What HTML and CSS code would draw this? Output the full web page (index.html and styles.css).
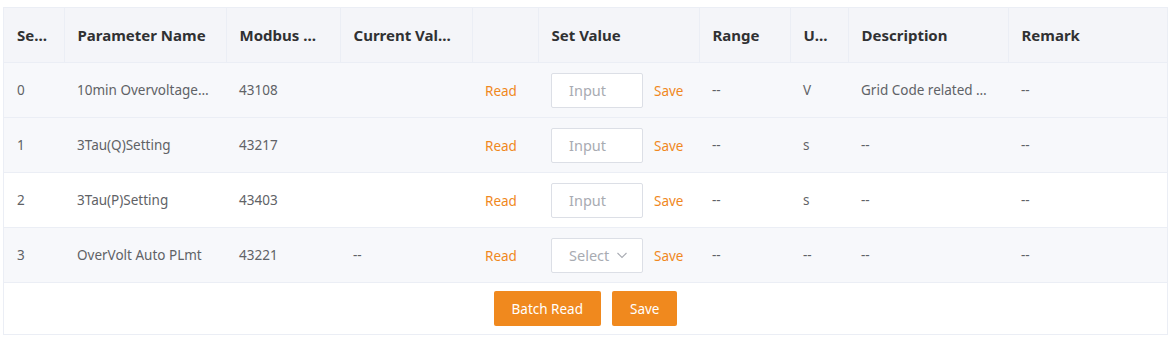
FILE: index.html
```html
<!DOCTYPE html>
<html lang="en">
<head>
<meta charset="utf-8">
<title>Parameter Settings</title>
<link rel="stylesheet" href="styles.css">
</head>
<body>
<div class="panel">
  <table class="param-table">
    <colgroup>
      <col class="c-seq"><col class="c-name"><col class="c-addr"><col class="c-cur">
      <col class="c-act"><col class="c-set"><col class="c-range"><col class="c-unit">
      <col class="c-desc"><col class="c-remark">
    </colgroup>
    <thead>
      <tr>
        <th><div class="cell">Serial No.</div></th>
        <th><div class="cell">Parameter Name</div></th>
        <th><div class="cell">Modbus Address</div></th>
        <th><div class="cell">Current Value</div></th>
        <th><div class="cell"></div></th>
        <th><div class="cell">Set Value</div></th>
        <th><div class="cell">Range</div></th>
        <th><div class="cell">Unit</div></th>
        <th><div class="cell">Description</div></th>
        <th><div class="cell">Remark</div></th>
      </tr>
    </thead>
    <tbody>
      <tr class="shaded">
        <td><div class="cell">0</div></td>
        <td><div class="cell">10min Overvoltage Protection</div></td>
        <td><div class="cell">43108</div></td>
        <td><div class="cell"></div></td>
        <td><div class="cell"><a class="link" href="#">Read</a></div></td>
        <td><div class="cell set"><span class="field">Input</span><a class="link" href="#">Save</a></div></td>
        <td><div class="cell">--</div></td>
        <td><div class="cell">V</div></td>
        <td><div class="cell">Grid Code related parameters</div></td>
        <td><div class="cell">--</div></td>
      </tr>
      <tr class="shaded">
        <td><div class="cell">1</div></td>
        <td><div class="cell">3Tau(Q)Setting</div></td>
        <td><div class="cell">43217</div></td>
        <td><div class="cell"></div></td>
        <td><div class="cell"><a class="link" href="#">Read</a></div></td>
        <td><div class="cell set"><span class="field">Input</span><a class="link" href="#">Save</a></div></td>
        <td><div class="cell">--</div></td>
        <td><div class="cell">s</div></td>
        <td><div class="cell">--</div></td>
        <td><div class="cell">--</div></td>
      </tr>
      <tr>
        <td><div class="cell">2</div></td>
        <td><div class="cell">3Tau(P)Setting</div></td>
        <td><div class="cell">43403</div></td>
        <td><div class="cell"></div></td>
        <td><div class="cell"><a class="link" href="#">Read</a></div></td>
        <td><div class="cell set"><span class="field">Input</span><a class="link" href="#">Save</a></div></td>
        <td><div class="cell">--</div></td>
        <td><div class="cell">s</div></td>
        <td><div class="cell">--</div></td>
        <td><div class="cell">--</div></td>
      </tr>
      <tr class="shaded">
        <td><div class="cell">3</div></td>
        <td><div class="cell">OverVolt Auto PLmt</div></td>
        <td><div class="cell">43221</div></td>
        <td><div class="cell">--</div></td>
        <td><div class="cell"><a class="link" href="#">Read</a></div></td>
        <td><div class="cell set"><span class="field select">Select<svg class="chev" viewBox="0 0 12 12" width="12" height="12"><path d="M1.5 4 L6 8.5 L10.5 4" fill="none" stroke="#a8abb2" stroke-width="1.1"/></svg></span><a class="link" href="#">Save</a></div></td>
        <td><div class="cell">--</div></td>
        <td><div class="cell">--</div></td>
        <td><div class="cell">--</div></td>
        <td><div class="cell">--</div></td>
      </tr>
    </tbody>
  </table>
  <div class="actions">
    <button class="btn" type="button">Batch Read</button>
    <button class="btn" type="button">Save</button>
  </div>
</div>
</body>
</html>
```
FILE: styles.css
```css
html, body {
  margin: 0;
  background: #ffffff;
}

body {
  padding: 7px 8px 0 3px;
  font-family: "Noto Sans", "Open Sans", Arial, sans-serif;
  font-size: 13.5px;
  color: #606266;
}

.panel {
  width: 1165px;
  border: 1px solid #ebeef5;
  box-sizing: border-box;
}

.param-table {
  width: 100%;
  table-layout: fixed;
  border-collapse: collapse;
}

.c-seq { width: 60px; }
.c-name { width: 162px; }
.c-addr { width: 114px; }
.c-cur { width: 132px; }
.c-act { width: 66px; }
.c-set { width: 161px; }
.c-range { width: 91px; }
.c-unit { width: 58px; }
.c-desc { width: 160px; }
.c-remark { width: auto; }

th, td {
  padding: 0;
  height: 54px;
  border-bottom: 1px solid #ebeef5;
  text-align: left;
  vertical-align: middle;
}

th {
  background: #f4f5f9;
  color: #303133;
  font-weight: 700;
  font-size: 15px;
  border-right: 1px solid #ebeef5;
}

th:last-child {
  border-right: none;
}

tr.shaded td {
  background: #f7f8fb;
}

.cell {
  padding: 0 14px 0 13px;
  white-space: nowrap;
  overflow: hidden;
  text-overflow: ellipsis;
  line-height: 20px;
}

th .cell {
  padding-right: 18px;
}

th:first-child .cell {
  padding-right: 12px;
}

.cell.set {
  display: flex;
  align-items: center;
  gap: 11px;
  overflow: visible;
  padding-right: 0;
}

.link {
  color: #f0881d;
  text-decoration: none;
  font-size: 13.5px;
  position: relative;
  top: 1px;
}

.field {
  box-sizing: border-box;
  flex: none;
  width: 92px;
  height: 35px;
  border: 1px solid #dcdfe6;
  border-radius: 2px;
  background: #ffffff;
  color: #a8abb2;
  font-size: 14.5px;
  display: flex;
  align-items: center;
  padding-left: 17px;
}

.field.select {
  gap: 7px;
}

.chev {
  display: block;
}

.actions {
  display: flex;
  justify-content: center;
  gap: 11px;
  padding: 8px 0 8px;
}

.btn {
  height: 35px;
  padding: 0 18px;
  border: none;
  border-radius: 2px;
  background: #f0891e;
  color: #ffffff;
  font-family: inherit;
  font-size: 13.5px;
  cursor: pointer;
}
```
